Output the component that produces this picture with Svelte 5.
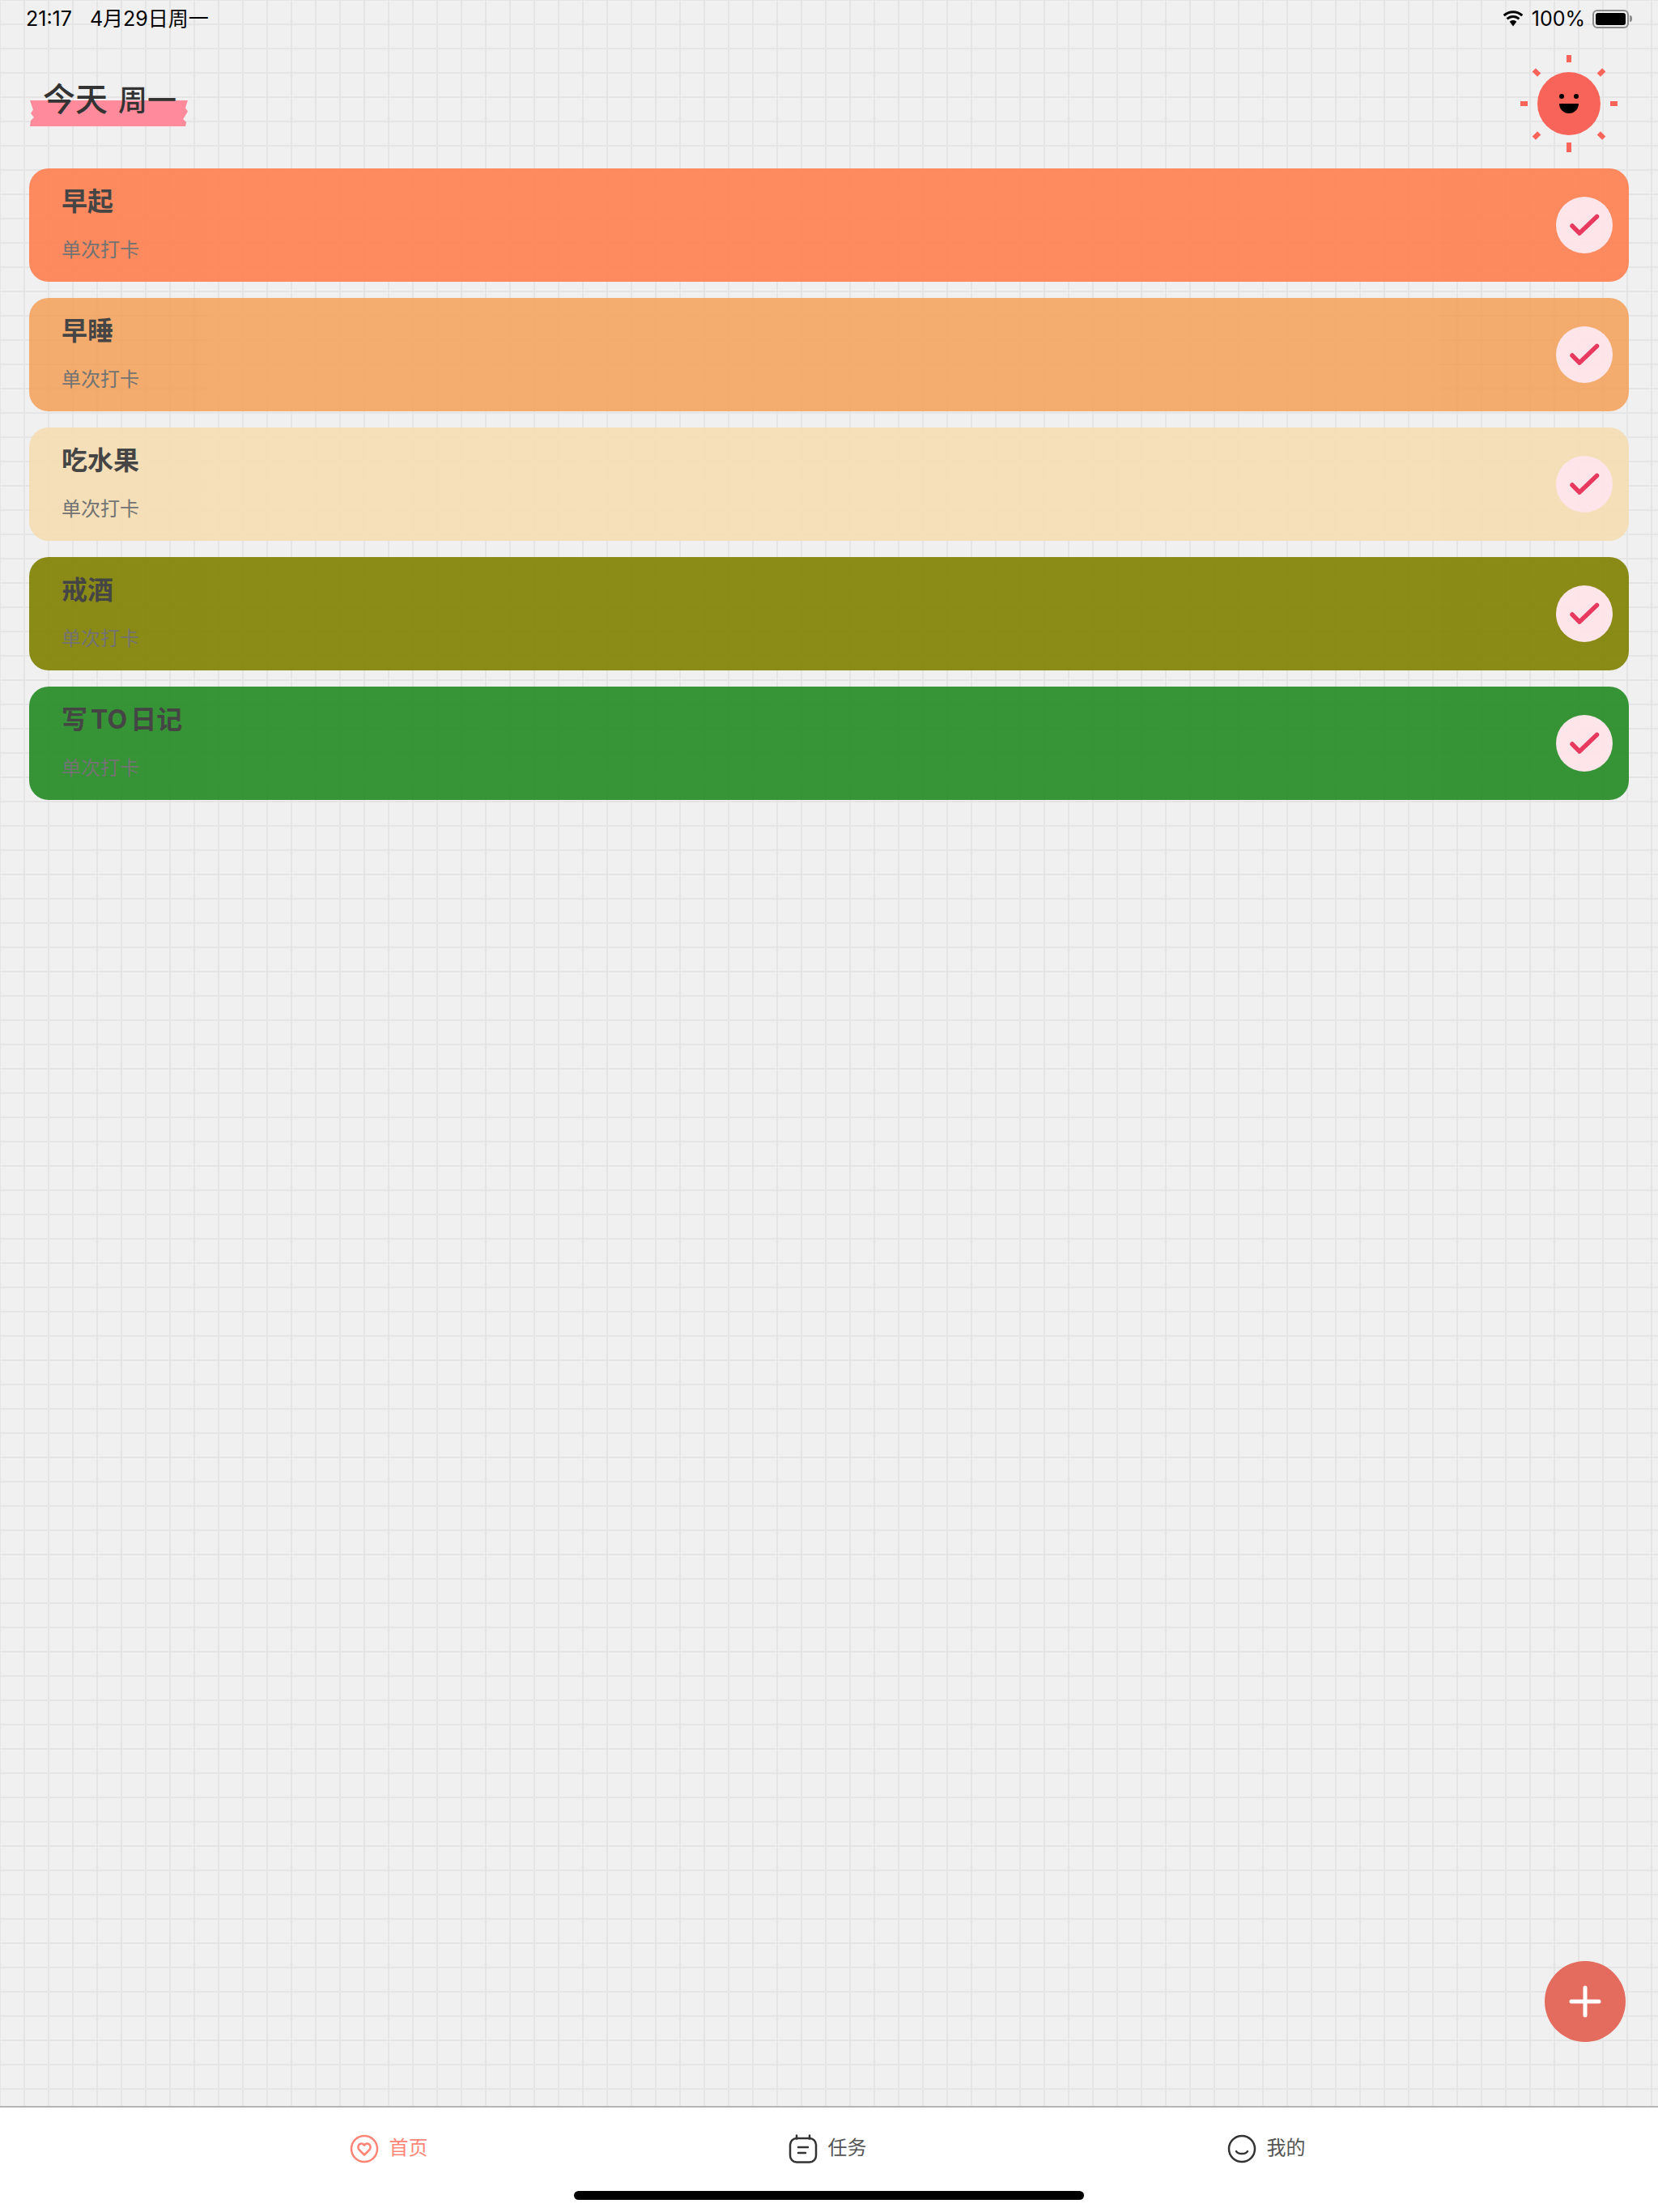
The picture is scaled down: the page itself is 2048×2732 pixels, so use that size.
<script>
    const habits = [
        { name: "早起", tone: "coral" },
        { name: "早睡", tone: "sandy" },
        { name: "吃水果", tone: "wheat" },
        { name: "戒酒", tone: "olive" },
        { name: "写 TO 日记", tone: "forest" },
    ];
</script>

<main class="page">
    <div class="status">
        <div class="clock">
            <span>21:17</span>
            <span>4月29日周一</span>
        </div>
        <div class="status-right">
            <svg class="wifi" viewBox="0 0 28 20" width="28" height="20">
                <path d="M14 3.2c4 0 7.6 1.6 10.3 4.1l2-2.2C23 2 18.700 .2 14 .2S5 2 1.700 5.100l2 2.200C6.400 4.800 10 3.200 14 3.200z" />
                <path d="M14 9c2.500 0 4.700 1 6.400 2.500l2-2.200C20.100 7.200 17.200 6 14 6s-6.100 1.200-8.400 3.300l2 2.200C9.300 10 11.500 9 14 9z" />
                <path d="M14 12c-1.700 0-3.200.6-4.300 1.700L14 19.500l4.300-5.800C17.200 12.600 15.700 12 14 12z" />
            </svg>
            <span class="percent">100%</span>
            <div class="battery"><div class="battery-fill"></div></div>
        </div>
    </div>

    <header class="header">
        <h1 class="title">
            <span class="tape"></span>
            <span class="today">今天</span>
            <span class="weekday">周一</span>
        </h1>
        <svg class="sun" viewBox="0 0 120 120" width="120" height="120">
            <circle cx="60" cy="60" r="39" fill="#f9645a" />
            <g fill="#f9645a">
                <rect x="57" y="0" width="6" height="9" />
                <rect x="57" y="108" width="6" height="12" />
                <rect x="0" y="57" width="9" height="6" />
                <rect x="111" y="57" width="9" height="6" />
                <rect x="17" y="17" width="6" height="9" transform="rotate(-45 20 21.500)" />
                <rect x="97" y="17" width="6" height="9" transform="rotate(45 100 21.500)" />
                <rect x="17" y="95" width="6" height="9" transform="rotate(45 20 99.500)" />
                <rect x="97" y="95" width="6" height="9" transform="rotate(-45 100 99.500)" />
            </g>
            <circle cx="51" cy="51" r="3" />
            <circle cx="69" cy="51" r="3" />
            <path d="M48 60h24a12 12 0 0 1-24 0z" />
        </svg>
    </header>

    <section class="list">
        {#each habits as habit}
            <article class="card {habit.tone}">
                <div class="card-text">
                    <div class="card-title">{habit.name}</div>
                    <div class="card-sub">单次打卡</div>
                </div>
                <div class="check">
                    <svg viewBox="0 0 40 32" width="40" height="32">
                        <path d="M5 17l9 9L35.500 5.500" fill="none" stroke="#e8264f" stroke-width="5.500" stroke-linecap="round" stroke-linejoin="round" />
                    </svg>
                </div>
            </article>
        {/each}
    </section>

    <button class="fab" aria-label="添加">
        <svg viewBox="0 0 40 40" width="40" height="40">
            <path d="M20 3v34M3 20h34" stroke="#fff" stroke-width="5" stroke-linecap="round" fill="none" />
        </svg>
    </button>

    <nav class="tabbar">
        <div class="tabs">
            <div class="tab active">
                <svg viewBox="0 0 36 36" width="36" height="36" fill="none" stroke="currentColor" stroke-width="2.500">
                    <circle cx="18" cy="18" r="16" />
                    <path d="M18 25.500l-6-6c-3.500-4-.5-8 2.500-8 1.500 0 2.800.8 3.500 2.300.7-1.500 2-2.300 3.500-2.300 3 0 6 4 2.500 8z" stroke-linejoin="round" />
                </svg>
                <span>首页</span>
            </div>
            <div class="tab">
                <svg viewBox="0 0 36 36" width="36" height="36" fill="none" stroke="currentColor" stroke-width="2.500" stroke-linecap="round">
                    <rect x="2" y="5" width="32" height="29.500" rx="8" />
                    <path d="M10 1.500v4M26 1.500v4M12 16h12M12 23h9" />
                </svg>
                <span>任务</span>
            </div>
            <div class="tab">
                <svg viewBox="0 0 36 36" width="36" height="36" fill="none" stroke="currentColor" stroke-width="2.500" stroke-linecap="round">
                    <circle cx="18" cy="18" r="16" />
                    <path d="M11 21c2 4 12 4 14 0" />
                </svg>
                <span>我的</span>
            </div>
        </div>
        <div class="home-bar"></div>
    </nav>
</main>

<style>
    :global(body) {
        margin: 0;
    }
    .page {
        position: relative;
        height: 2732px;
        display: flex;
        flex-direction: column;
        overflow: hidden;
        background-color: #f0f0f0;
        background-image: linear-gradient(#e5e5e5 2px, transparent 2px),
            linear-gradient(90deg, #e5e5e5 2px, transparent 2px);
        background-size: 30px 30px;
        background-position: -1px -1px;
        font-family: Inter, "Noto Sans CJK SC", sans-serif;
        color: #333;
    }
    .status {
        height: 46px;
        padding: 0 36px 0 32px;
        display: flex;
        align-items: center;
        justify-content: space-between;
        font-size: 25px;
        line-height: 36px;
        color: #000;
    }
    .clock {
        display: flex;
        align-items: baseline;
        gap: 22px;
    }
    .status-right {
        display: flex;
        align-items: center;
        gap: 9px;
    }
    .wifi {
        fill: #000;
    }
    .battery {
        position: relative;
        width: 45px;
        height: 23px;
        box-sizing: border-box;
        border: 2px solid #8c8c8c;
        border-radius: 6px;
        padding: 2px;
    }
    .battery::after {
        content: "";
        position: absolute;
        right: -6px;
        top: 5px;
        width: 3px;
        height: 8px;
        border-radius: 0 3px 3px 0;
        background: #8c8c8c;
    }
    .battery-fill {
        height: 100%;
        background: #000;
        border-radius: 3px;
    }
    .header {
        height: 162px;
        box-sizing: border-box;
        padding: 22px 50px 0 37px;
        display: flex;
        align-items: flex-start;
        justify-content: space-between;
    }
    .title {
        position: relative;
        margin: 28px 0 0;
        width: 195px;
        height: 54px;
        padding-left: 16px;
        box-sizing: border-box;
        display: flex;
        align-items: baseline;
        gap: 13px;
        font-weight: 500;
        line-height: 54px;
        white-space: nowrap;
    }
    .tape {
        position: absolute;
        left: 0;
        top: 28px;
        width: 195px;
        height: 32px;
        background: #ff8a9b;
        clip-path: polygon(0 0, 100% 0, 99% 18%, 98.500% 30%, 100% 42%, 98.500% 58%, 97% 72%, 99% 84%, 98.500% 100%, 0 100%, 0.500% 78%, 2.500% 66%, 0.500% 50%, 2% 36%, 1% 18%);
    }
    .today,
    .weekday {
        position: relative;
    }
    .today {
        font-size: 40px;
    }
    .weekday {
        font-size: 36px;
    }
    .sun {
        fill: #000;
    }
    .list {
        display: flex;
        flex-direction: column;
        gap: 20px;
        padding: 0 36px;
    }
    .card {
        height: 140px;
        box-sizing: border-box;
        padding: 0 20px 0 40px;
        border-radius: 24px;
        display: flex;
        align-items: center;
        justify-content: space-between;
        opacity: 0.9;
    }
    .coral {
        background: #ff7f50;
    }
    .sandy {
        background: #f4a460;
    }
    .wheat {
        background: #f5deb3;
    }
    .olive {
        background: #808000;
    }
    .forest {
        background: #228b22;
    }
    .card-text {
        padding-bottom: 4px;
    }
    .card-title {
        font-size: 32px;
        line-height: 44px;
        font-weight: 700;
        word-spacing: -3.500px;
        color: #333;
    }
    .card-sub {
        margin-top: 21px;
        font-size: 24px;
        line-height: 34px;
        color: #666;
    }
    .check {
        width: 70px;
        height: 70px;
        border-radius: 50%;
        background: #ffe4ea;
        display: flex;
        align-items: center;
        justify-content: center;
    }
    .fab {
        position: absolute;
        left: 1908px;
        top: 2422px;
        width: 100px;
        height: 100px;
        padding: 0;
        border: none;
        border-radius: 50%;
        background: #e36c5e;
        display: flex;
        align-items: center;
        justify-content: center;
    }
    .tabbar {
        margin-top: auto;
        height: 131px;
        box-sizing: border-box;
        border-top: 2px solid #b4b4b4;
        background: #fff;
        display: flex;
        flex-direction: column;
        align-items: center;
    }
    .tabs {
        margin-top: 30px;
        padding-right: 4px;
        display: grid;
        grid-template-columns: repeat(3, 542px);
    }
    .tab {
        display: flex;
        align-items: center;
        justify-content: center;
        gap: 13px;
        font-size: 24px;
        color: #555;
    }
    .tab span {
        margin-bottom: 6px;
    }
    .tab svg {
        color: #333;
    }
    .tab.active,
    .tab.active svg {
        color: #ff8577;
    }
    .home-bar {
        margin-top: 32px;
        width: 630px;
        height: 11px;
        border-radius: 6px;
        background: #000;
    }
</style>
